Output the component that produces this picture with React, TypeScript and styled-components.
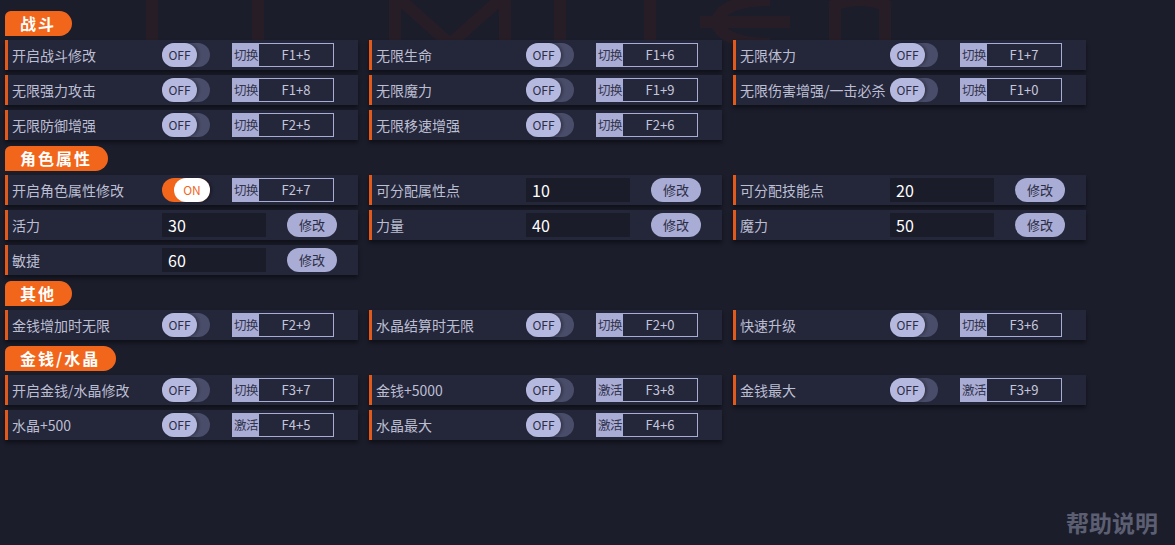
import React from 'react';
import styled, { createGlobalStyle } from 'styled-components';

type ToggleItem = { kind: 'toggle'; label: string; on?: boolean; action: string; key: string };
type InputItem = { kind: 'input'; label: string; value: string };
type Item = ToggleItem | InputItem;

interface Section {
  title: string;
  items: Item[];
}

const t = (label: string, key: string, action = '切换', on = false): Item => ({
  kind: 'toggle',
  label,
  key,
  action,
  on,
});
const v = (label: string, value: string): Item => ({ kind: 'input', label, value });

const SECTIONS: Section[] = [
  {
    title: '战斗',
    items: [
      t('开启战斗修改', 'F1+5'),
      t('无限生命', 'F1+6'),
      t('无限体力', 'F1+7'),
      t('无限强力攻击', 'F1+8'),
      t('无限魔力', 'F1+9'),
      t('无限伤害增强/一击必杀', 'F1+0'),
      t('无限防御增强', 'F2+5'),
      t('无限移速增强', 'F2+6'),
    ],
  },
  {
    title: '角色属性',
    items: [
      t('开启角色属性修改', 'F2+7', '切换', true),
      v('可分配属性点', '10'),
      v('可分配技能点', '20'),
      v('活力', '30'),
      v('力量', '40'),
      v('魔力', '50'),
      v('敏捷', '60'),
    ],
  },
  {
    title: '其他',
    items: [
      t('金钱增加时无限', 'F2+9'),
      t('水晶结算时无限', 'F2+0'),
      t('快速升级', 'F3+6'),
    ],
  },
  {
    title: '金钱/水晶',
    items: [
      t('开启金钱/水晶修改', 'F3+7'),
      t('金钱+5000', 'F3+8', '激活'),
      t('金钱最大', 'F3+9', '激活'),
      t('水晶+500', 'F4+5', '激活'),
      t('水晶最大', 'F4+6', '激活'),
    ],
  },
];

const GlobalStyle = createGlobalStyle`
  html, body {
    margin: 0;
    padding: 0;
    background: #1b1d2b;
  }
  body {
    font-family: "Noto Sans CJK SC", "Noto Sans", sans-serif;
    width: 1175px;
    height: 545px;
    overflow: hidden;
  }
`;

const App: React.FC = () => {
  return (
    <Page>
      <GlobalStyle />
      <Watermark viewBox="0 0 1175 50" preserveAspectRatio="none">
        <g fill="none" stroke="#341d25" strokeWidth="12" opacity="0.5">
          <path d="M152 -10 V44" />
          <path d="M258 -10 V44" />
          <path d="M395 -10 V44 M395 -5 L450 44 L505 -5 V44" />
          <path d="M560 -10 V44" />
          <path d="M650 -10 V44" />
          <path d="M770 0 C700 0 700 44 770 44 M700 22 H790" />
          <path d="M835 44 V5 Q860 -5 885 5 V44" />
        </g>
      </Watermark>
      <Content>
        {SECTIONS.map((section) => (
          <Block key={section.title}>
            <Header>{section.title}</Header>
            <Grid>
              {section.items.map((item) => (
                <Row key={item.label}>
                  <Label>{item.label}</Label>
                  {item.kind === 'toggle' ? (
                    <>
                      <Toggle on={!!item.on}>
                        <Knob on={!!item.on}>{item.on ? 'ON' : 'OFF'}</Knob>
                      </Toggle>
                      <Hotkey>
                        <HotkeyAction>{item.action}</HotkeyAction>
                        <HotkeyKey>{item.key}</HotkeyKey>
                      </Hotkey>
                    </>
                  ) : (
                    <>
                      <ValueBox>{item.value}</ValueBox>
                      <EditButton>修改</EditButton>
                    </>
                  )}
                </Row>
              ))}
            </Grid>
          </Block>
        ))}
      </Content>
      <Help>帮助说明</Help>
    </Page>
  );
};

const Page = styled.div`
  position: relative;
  width: 1175px;
  height: 545px;
  background: #1b1d2b;
  display: flex;
  flex-direction: column;
`;

const Watermark = styled.svg`
  position: absolute;
  left: 0;
  top: 0;
  width: 1175px;
  height: 50px;
  pointer-events: none;
`;

const Content = styled.div`
  position: relative;
  padding: 5px 0 0 5px;
  display: flex;
  flex-direction: column;
`;

const Block = styled.div`
  display: flex;
  flex-direction: column;
  margin-top: 6px;
`;

const Header = styled.div`
  align-self: flex-start;
  height: 25px;
  line-height: 25px;
  padding: 0 16px 0 15px;
  background: #f2661b;
  color: #ffffff;
  font-size: 16px;
  font-weight: bold;
  letter-spacing: 2px;
  white-space: pre;
  border-radius: 6px 13px 13px 0;
  margin-bottom: 4px;
`;

const Grid = styled.div`
  display: grid;
  grid-template-columns: repeat(3, 353px);
  column-gap: 11px;
  row-gap: 5px;
`;

const Row = styled.div`
  height: 30px;
  display: flex;
  align-items: center;
  background: #24263a;
  border-left: 3px solid #e15a1c;
  padding-left: 4px;
  box-sizing: border-box;
  box-shadow: 0 3px 4px rgba(0, 0, 0, 0.45);
`;

const Label = styled.div`
  width: 150px;
  flex-shrink: 0;
  white-space: nowrap;
  color: #bcbfd2;
  font-size: 14px;
`;

const Toggle = styled.div<{ on: boolean }>`
  width: 48px;
  height: 24px;
  border-radius: 12px;
  background: ${(p) => (p.on ? '#f2661b' : '#4a4d69')};
  display: flex;
  justify-content: ${(p) => (p.on ? 'flex-end' : 'flex-start')};
  flex-shrink: 0;
`;

const Knob = styled.div<{ on: boolean }>`
  width: ${(p) => (p.on ? '36px' : '35px')};
  height: 24px;
  border-radius: 12px;
  background: ${(p) => (p.on ? '#ffffff' : '#b6b9df')};
  color: ${(p) => (p.on ? '#f2661b' : '#2b2d44')};
  font-size: 12px;
  line-height: 24px;
  text-align: center;
  box-shadow: 2px 0 3px rgba(0, 0, 0, 0.3);
`;

const Hotkey = styled.div`
  margin-left: 22px;
  width: 102px;
  height: 24px;
  display: flex;
  border: 1px solid #a9acd4;
  box-sizing: border-box;
`;

const HotkeyAction = styled.div`
  width: 26px;
  flex-shrink: 0;
  background: #a9acd4;
  color: #33354e;
  font-size: 12.5px;
  line-height: 22px;
  text-align: center;
  white-space: nowrap;
  overflow: hidden;
  letter-spacing: -0.5px;
`;

const HotkeyKey = styled.div`
  flex: 1;
  color: #c4c6dc;
  font-size: 13px;
  line-height: 22px;
  text-align: center;
`;

const ValueBox = styled.div`
  width: 104px;
  height: 24px;
  background: #1a1c2a;
  color: #ffffff;
  font-size: 16px;
  line-height: 24px;
  padding-left: 6px;
  box-sizing: border-box;
`;

const EditButton = styled.div`
  margin-left: 21px;
  width: 50px;
  height: 24px;
  border-radius: 12px;
  background: #a9acd4;
  color: #2b2d44;
  font-size: 13px;
  line-height: 24px;
  text-align: center;
`;

const Help = styled.div`
  margin-top: auto;
  align-self: flex-end;
  margin-right: 17px;
  margin-bottom: 6px;
  color: #5c5f72;
  font-size: 23px;
  font-weight: bold;
`;

export default App;
